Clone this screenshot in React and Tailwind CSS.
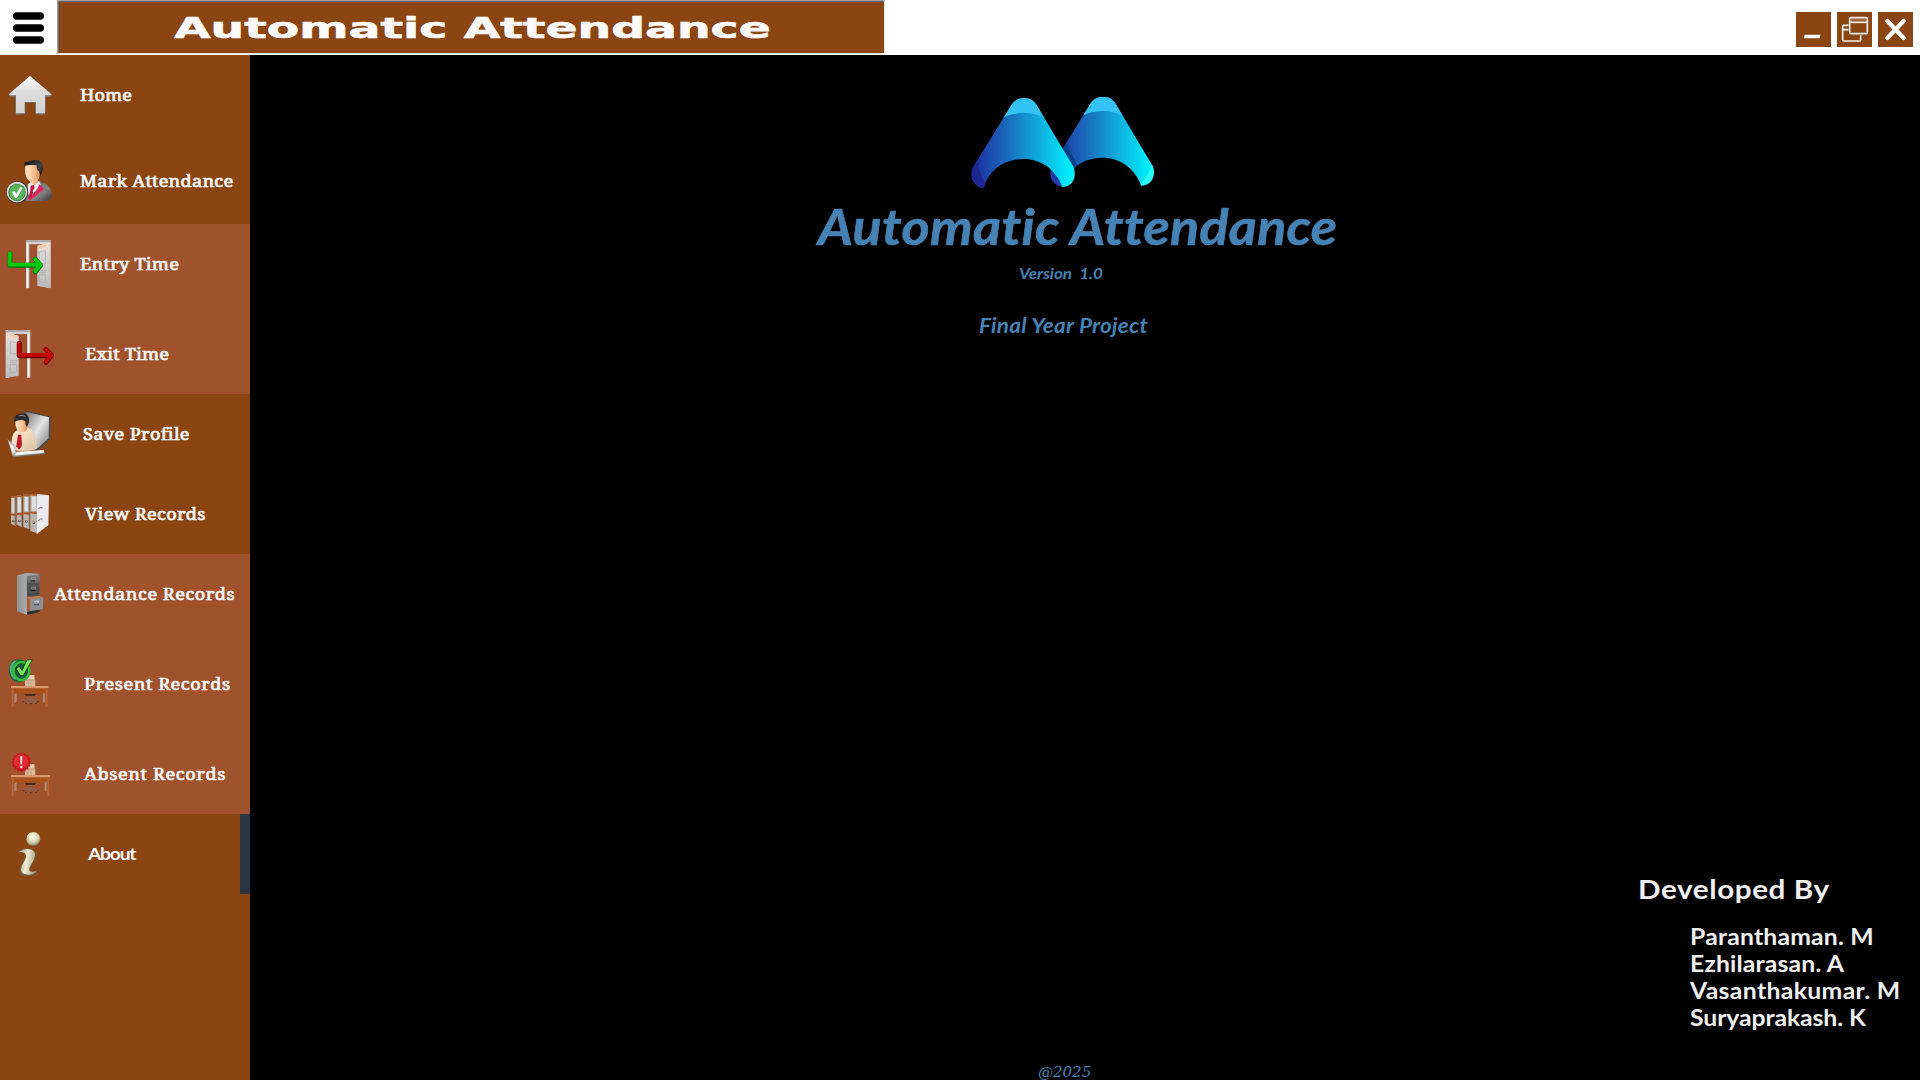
import React, { useLayoutEffect, useRef, useState } from "react";

// Text whose letters are spread evenly over the given width.
// With `wide`, the glyphs themselves are also stretched by a tenth.
function Spread({ text, width, wide = false, className = "" }) {
  const ref = useRef(null);
  const [spacing, setSpacing] = useState(0);
  useLayoutEffect(() => {
    const target = wide ? width / 1.1 : width;
    setSpacing((target - ref.current.offsetWidth) / (text.length - 1));
  }, []);
  return (
    <span
      ref={ref}
      className={"inline-block whitespace-pre leading-none " + (wide ? "origin-left scale-x-110 " : "") + className}
      style={{ letterSpacing: spacing + "px" }}
    >
      {text}
    </span>
  );
}

function Icon({ top, children }) {
  return (
    <svg className="h-20 w-[60px] shrink-0" viewBox={`0 ${top} 180 240`}>
      {children}
    </svg>
  );
}

const HomeIcon = () => (
  <Icon top={165}>
    <defs>
      <linearGradient id="hm" x1="0" y1="0" x2="0" y2="1">
        <stop offset="0" stopColor="#fff" />
        <stop offset=".4" stopColor="#dedede" />
        <stop offset="1" stopColor="#d2d2d2" />
      </linearGradient>
    </defs>
    <path d="M90 227 L156 283 Q157 291 149 290 L138 290 L137 341 Q136 344 132 344 L105 343 L105 309 L76 309 L76 343 L48 344 Q45 343 45 340 L45 290 L32 290 Q24 289 26 282 Z" fill="#73706c" />
    <path d="M90 228 L154 283 Q154 286 149 286 L135 286 L135 340 L108 340 L108 306 L74 306 L74 340 L48 340 L48 286 L31 286 Q27 285 28 281 Z" fill="url(#hm)" />
  </Icon>
);

const MarkIcon = () => (
  <Icon top={423}>
    <defs>
      <linearGradient id="face" x1="0" y1="0" x2="1" y2="0">
        <stop offset="0" stopColor="#fbe0c8" />
        <stop offset=".45" stopColor="#ffc9a0" />
        <stop offset="1" stopColor="#e08a55" />
      </linearGradient>
      <linearGradient id="hair" x1="0" y1="0" x2="1" y2="1">
        <stop offset="0" stopColor="#111" />
        <stop offset=".6" stopColor="#444" />
        <stop offset="1" stopColor="#111" />
      </linearGradient>
      <linearGradient id="suit" x1="0" y1="0" x2="1" y2="1">
        <stop offset="0" stopColor="#5a5a5a" />
        <stop offset=".6" stopColor="#858585" />
        <stop offset="1" stopColor="#333" />
      </linearGradient>
    </defs>
    <path d="M72 600 Q72 566 88 550 L119 543 Q156 556 156 588 Q154 604 122 604 L84 603 Z" fill="url(#suit)" />
    <path d="M84 553 L97 542 L118 544 L122 554 L100 580 L82 585 Z" fill="#f4f1f2" />
    <path d="M118 552 L132 568 L90 601 L83 598 L110 572 Z" fill="#e8235d" />
    <path d="M92 557 L102 555 L104 564 L99 570 L96 592 L86 594 L91 570 Z" fill="#c3123d" />
    <path d="M76 497 Q84 488 118 495 Q125 512 120 523 L113 547 Q108 558 99 554 L83 538 Q73 526 76 497 Z" fill="url(#face)" />
    <path d="M73 497 Q70 484 84 485 Q110 474 125 487 Q133 500 127 515 L121 529 L117 514 Q109 511 110 496 Q92 493 73 497 Z" fill="url(#hair)" />
    <circle cx="52" cy="577" r="33" fill="#343434" />
    <circle cx="51" cy="576" r="31" fill="#d9d9d9" />
    <circle cx="51" cy="577" r="26" fill="#2f6f36" />
    <circle cx="51" cy="577" r="24" fill="#58b45b" />
    <path d="M36 576 L44 573 L49 583 L61 561 L68 563 L51 594 L45 594 Z" fill="#fff" />
  </Icon>
);

const doorPaint = (id) => (
  <defs>
    <linearGradient id={id} x1="0" y1="0" x2="0" y2="1">
      <stop offset="0" stopColor="#f3dfd2" />
      <stop offset=".25" stopColor="#d7d5d3" />
      <stop offset="1" stopColor="#bcbcbc" />
    </linearGradient>
  </defs>
);

const EntryIcon = () => (
  <Icon top={12}>
    {doorPaint("dr1")}
    <path d="M78 61 H152 V204 H140 V73 H88 V205 H78 Z" fill="#d0d0d0" />
    <path d="M78 61 H152 V66 H78 Z" fill="#aaa" />
    <path d="M80 70 H84 V204 H80 Z" fill="#f0f0f0" />
    <path d="M112 77 L142 69 H151 V205 L112 198 Z" fill="url(#dr1)" />
    <path d="M118 75 L139 71 L139 80 L113 87 Z" fill="#f8c9a4" />
    <path d="M118 95 L136 92 V132 H118 Z M118 152 H136 V158 H118 Z M118 164 H136 V188 L118 186 Z" fill="none" stroke="#aaa" strokeWidth="2" />
    <path d="M30 101 V136 H116" fill="none" stroke="#007e08" strokeWidth="15" strokeLinecap="round" strokeLinejoin="round" />
    <path d="M106 118 L122 136 L106 155" fill="none" stroke="#007e08" strokeWidth="15" strokeLinecap="round" strokeLinejoin="round" />
    <path d="M29 101 V134 H116 M106 118 L121 135 L106 153" fill="none" stroke="#0bc70d" strokeWidth="11" strokeLinecap="round" strokeLinejoin="round" />
  </Icon>
);

const ExitIcon = () => (
  <Icon top={282}>
    {doorPaint("dr2")}
    <path d="M17 331 H91 V473 H81 V342 H27 V473 H17 Z" fill="#d0d0d0" />
    <path d="M17 331 H91 V336 H17 Z" fill="#aaa" />
    <path d="M84 340 H88 V472 H84 Z" fill="#f0f0f0" />
    <path d="M18 339 H28 L56 347 V467 L18 474 Z" fill="url(#dr2)" />
    <path d="M29 341 L52 347 L55 354 L31 349 Z" fill="#f8c9a4" />
    <path d="M31 365 L50 368 V401 H31 Z M31 421 H50 V427 H31 Z M31 433 H50 V456 L31 458 Z" fill="none" stroke="#aaa" strokeWidth="2" />
    <path d="M58 370 V407 H150 M138 388 L155 407 L138 427" fill="none" stroke="#740000" strokeWidth="15" strokeLinecap="round" strokeLinejoin="round" />
    <path d="M57 370 V405 H148 M138 388 L154 406 L138 425" fill="none" stroke="#c60404" strokeWidth="10" strokeLinecap="round" strokeLinejoin="round" />
  </Icon>
);

const SaveIcon = () => (
  <Icon top={-3}>
    <defs>
      <linearGradient id="scr" x1="0" y1="0" x2="1" y2="1">
        <stop offset="0" stopColor="#777" />
        <stop offset=".5" stopColor="#e6e6e6" />
        <stop offset="1" stopColor="#777" />
      </linearGradient>
      <linearGradient id="shirt" x1="0" y1="0" x2="1" y2="1">
        <stop offset="0" stopColor="#fff3df" />
        <stop offset="1" stopColor="#dcbf9b" />
      </linearGradient>
    </defs>
    <path d="M75 46 L153 65 L151 133 L113 168 L70 150 Z" fill="#4c4c4c" />
    <path d="M79 51 L147 67 L146 130 L114 159 L80 140 Z" fill="url(#scr)" />
    <path d="M35 165 Q31 120 48 107 L80 96 Q105 105 107 130 L112 160 Q100 170 60 168 Z" fill="url(#shirt)" />
    <path d="M48 72 Q60 62 84 78 Q86 96 78 108 Q66 118 54 108 Q42 92 48 72 Z" fill="url(#face)" />
    <path d="M43 80 Q40 62 55 58 Q76 48 86 66 Q90 82 80 96 Q75 87 76 79 Q64 70 43 80 Z" fill="#2c2c2c" />
    <path d="M54 64 Q66 54 79 66 Q67 62 54 64 Z" fill="#888" />
    <path d="M54 119 L64 119 L66 152 L57 164 L49 154 Z" fill="#bd1b2b" />
    <path d="M23 133 L43 150 L50 176 L38 184 Z" fill="#b5b5b5" />
    <path d="M26 140 L41 154 L46 172 L39 177 Z" fill="#eee" />
    <path d="M48 173 L134 166 V178 L38 187 Z" fill="#777" />
    <path d="M50 170 L132 165 V173 L42 182 Z" fill="#f0f0f0" />
  </Icon>
);

const binders = [
  [33, 303, 13, 82],
  [50, 301, 16, 87],
  [70, 299, 18, 96],
  [91, 297, 21, 110],
];

const ViewIcon = () => (
  <Icon top={237}>
    {binders.map(([x, y, w, h]) => (
      <g key={x}>
        <path d={`M${x} ${y} h${w} v${h + 8} l${-w} -7 Z`} fill="#b9b6b2" />
        <path d={`M${x} ${y} h${w} v5 h${-w} Z M${x} ${y + 53} h${w} v8 l${-w} -3 Z`} fill="#b8571f" />
        <path d={`M${x + 4} ${y + 7} h${w - 7} v43 h${7 - w} Z`} fill="#dcdcdc" />
        <path d={`M${x + w - 1} ${y} v${h + 7}`} stroke="#77706b" strokeWidth="2" />
        <circle cx={x + w / 2} cy={y + h - 7 - (h - 82) * 0.6} r="4" fill="#565656" />
        <circle cx={x + w / 2} cy={y + h - 8 - (h - 82) * 0.6} r="1.5" fill="#eee" />
      </g>
    ))}
    <path d="M112 297 L147 301 L145 391 L110 417 Z" fill="#e9e9ee" />
    <path d="M112 300 V416" stroke="#fff" strokeWidth="2" />
    <path d="M115 341 q7 -6 13 -3 M115 377 q7 -7 13 -5" fill="none" stroke="#777" strokeWidth="3" />
  </Icon>
);

const CabinetIcon = () => (
  <Icon top={12}>
    <defs>
      <linearGradient id="cab" x1="0" y1="0" x2="1" y2="0">
        <stop offset="0" stopColor="#8d9193" />
        <stop offset="1" stopColor="#a9adaf" />
      </linearGradient>
      <linearGradient id="cabf" x1="0" y1="0" x2="0" y2="1">
        <stop offset="0" stopColor="#8a8a8a" />
        <stop offset=".35" stopColor="#4d4d4d" />
        <stop offset="1" stopColor="#666" />
      </linearGradient>
    </defs>
    <path d="M51 77 L82 69 L82 195 L51 184 Z" fill="url(#cab)" />
    <path d="M51 77 L80 69 L119 72 L119 186 L82 195 L80 78 Z" fill="url(#cabf)" />
    <path d="M51 77 L80 69 L119 72 L82 79 Z" fill="#a3a7a8" />
    <path d="M83 102 H118 M83 133 L118 131" stroke="#333" strokeWidth="2" />
    <path d="M94 83 H107 V88 H94 Z M95 112 H107 V117 H95 Z" fill="none" stroke="#aaa" strokeWidth="1.5" />
    <path d="M93 93 h12 M94 122 h12" stroke="#1c1c1c" strokeWidth="3" />
    <path d="M81 142 L90 138 L92 180 L81 184 Z" fill="#b25a2c" />
    <path d="M81 142 L118 137 L130 143 L91 149 Z" fill="#c97647" />
    <path d="M90 147 L130 142 L129 177 L90 183 Z" fill="#8b8f91" />
    <path d="M103 152 h14 v5 h-14 Z" fill="#c7c7c7" />
    <path d="M102 164 h15" stroke="#444" strokeWidth="3" />
    <path d="M81 186 L119 180 V185 L82 195 Z" fill="#2d2d2d" />
  </Icon>
);

// Desk with a box and a chair; dy moves it within the icon.
const Desk = ({ dy, right }) => (
  <g transform={`translate(0 ${dy})`}>
    <path d="M75 393 L80 376 H103 V387 L106 390 V411 H75 Z" fill="#d8b995" />
    <path d="M80 376 H103 V387 H78 Z" fill="#e8cfae" />
    <path d="M78 390 H105 M84 391 v18 M93 391 v18" stroke="#a98765" strokeWidth="1.5" fill="none" />
    <path d={`M36 415 H${right - 3} V431 H36 Z`} fill="#a9501c" />
    <path d={`M33 408 H${right} V415 H33 Z`} fill="#d9976b" />
    <path d={`M35 416 H41 V470 H35 Z M${right - 8} 416 h6 V470 h-6 Z`} fill="#bb6430" />
    <path d={`M43 432 l7 -2 v26 l-7 3 Z M${right - 16} 430 h6 v28 l-6 -2 Z`} fill="#a98a78" />
    <path d="M73 432 H109 L104 438 H78 Z" fill="#4a2b22" />
    <path d="M92 438 V461 M70 453 L92 446 L114 453 M76 459 L92 448 L108 459" fill="none" stroke="#806a60" strokeWidth="2.5" />
    <path d="M68 455 h5 M111 455 h5 M75 460 h5 M105 460 h5 M90 461 h5" stroke="#473631" strokeWidth="3" />
  </g>
);

const PresentIcon = () => (
  <Icon top={282}>
    <Desk dy={0} right={145} />
    <path d="M40 332 Q58 325 76 333 L86 350 Q94 372 80 388 Q66 400 44 394 Q24 380 27 354 Q30 338 40 332 Z" fill="#13623d" />
    <path d="M29 352 Q34 332 52 331 Q36 345 37 362 Q38 380 52 392 Q28 386 29 352 Z" fill="#4cae83" />
    <ellipse cx="64" cy="363" rx="24" ry="27" fill="none" stroke="#39ba3b" strokeWidth="8" />
    <path d="M48 356 L57 350 L65 361 L82 331 L95 330 L68 377 L62 377 Z" fill="#0d451d" stroke="#0d451d" strokeWidth="4" />
    <path d="M50 356 L58 351 L66 364 L82 331 L95 330 L69 376 L62 376 Z" fill="#7be85c" />
  </Icon>
);

const burst = Array.from({ length: 32 }, (_, i) => {
  const r = i % 2 ? 25 : 30;
  const a = (i * Math.PI) / 16;
  return `${(64 + r * Math.cos(a)).toFixed(1)},${(637 + r * Math.sin(a)).toFixed(1)}`;
}).join(" ");

const AbsentIcon = () => (
  <Icon top={552}>
    <Desk dy={267} right={150} />
    <polygon points={burst} fill="#c8141f" />
    <circle cx="63" cy="635" r="22" fill="#e22a33" />
    <path d="M61 619 H67 L66 643 H62 Z" fill="#fff" />
    <circle cx="64" cy="651" r="3.5" fill="#fff" />
  </Icon>
);

const AboutIcon = () => (
  <Icon top={42}>
    <defs>
      <radialGradient id="ball" cx=".45" cy=".35" r=".65">
        <stop offset="0" stopColor="#fffbe6" />
        <stop offset=".6" stopColor="#ddd6b4" />
        <stop offset="1" stopColor="#7f7a62" />
      </radialGradient>
      <linearGradient id="stem" x1="0" y1="0" x2="1" y2=".2">
        <stop offset="0" stopColor="#a19b7e" />
        <stop offset=".5" stopColor="#f3edcf" />
        <stop offset="1" stopColor="#aca587" />
      </linearGradient>
    </defs>
    <circle cx="100" cy="117" r="21" fill="url(#ball)" />
    <path d="M54 156 Q70 142 91 146 Q108 150 108 166 Q106 182 96 194 Q88 206 91 213 Q98 218 113 210 Q109 226 86 228 Q62 228 59 211 Q60 197 70 183 Q78 170 73 162 Q66 156 55 160 Z" fill="#69644f" />
    <path d="M56 156 Q72 144 90 148 Q105 152 105 166 Q103 180 94 192 Q85 206 89 213 Q98 219 109 212 Q105 222 86 224 Q65 224 63 210 Q64 197 73 184 Q82 169 75 160 Q67 154 56 156 Z" fill="url(#stem)" />
  </Icon>
);

const serif = "font-['Noto_Serif','DejaVu_Serif_Condensed','DejaVu_Serif',serif] [font-stretch:condensed] text-[16.5px] font-normal [-webkit-text-stroke:0.7px_#f5f5f5]";

function Row({ icon, label, width, className = "", font = serif }) {
  return (
    <div className="flex h-20 items-center">
      {icon}
      <div className={"flex " + className}>
        <Spread wide text={label} width={width} className={font} />
      </div>
    </div>
  );
}

function Sidebar() {
  return (
    <nav className="flex w-[250px] shrink-0 flex-col bg-[#8b4513] text-[#f5f5f5]">
      <div className="flex h-[169px] flex-col gap-[6px]">
        <Row icon={<HomeIcon />} label="Home" width={52} className="ml-5" />
        <Row icon={<MarkIcon />} label="Mark Attendance" width={153} className="ml-5" />
      </div>
      <div className="flex h-[170px] flex-col gap-[10px] bg-[#a0522d]">
        <Row icon={<EntryIcon />} label="Entry Time" width={99} className="ml-5" />
        <Row icon={<ExitIcon />} label="Exit Time" width={84} className="ml-[25px]" />
      </div>
      <div className="flex flex-col">
        <Row icon={<SaveIcon />} label="Save Profile" width={106} className="ml-[23px]" />
        <Row icon={<ViewIcon />} label="View Records" width={120} className="ml-[25px]" />
      </div>
      <div className="flex h-[260px] flex-col gap-[10px] bg-[#a0522d]">
        <Row icon={<CabinetIcon />} label="Attendance Records" width={181} className="-ml-[6.5px]" />
        <Row icon={<PresentIcon />} label="Present Records" width={146} className="ml-6" />
        <Row icon={<AbsentIcon />} label="Absent Records" width={141} className="ml-[23.5px]" />
      </div>
      <div className="flex justify-between">
        <Row icon={<AboutIcon />} label="About" width={49} className="ml-[28px]" font="font-[Lato,sans-serif] text-[17.5px] font-bold" />
        <div className="w-[10px] bg-[#2c3442]" />
      </div>
    </nav>
  );
}

function Header() {
  return (
    <header className="flex h-[55px] shrink-0 bg-white">
      <div className="flex w-[57px] items-center justify-center">
        <svg className="h-[55px] w-[57px]" viewBox="0 0 57 55" stroke="#000" strokeWidth="7.4" strokeLinecap="round">
          <path d="M16.7 16h23.6M16.7 28h23.6M16.7 40h23.6" />
        </svg>
      </div>
      <div className="h-[54px] w-[828px] border-t border-l border-r border-b border-t-[#a0a0a0] border-r-[#e3e3e3] border-b-[#e3e3e3] border-l-[#a0a0a0]">
        <div className="flex h-full border-t border-l border-[#696969] bg-[#8b4513] pt-[12px] pl-[115px]">
          <span className="origin-top-left scale-x-[1.63] text-[29px] leading-none font-bold whitespace-nowrap text-[#fffafa] [-webkit-text-stroke:0.6px_#fffafa] [font-family:'DejaVu_Sans',sans-serif]">
            Automatic Attendance
          </span>
        </div>
      </div>
      <div className="mt-3 mr-[7px] ml-auto flex gap-[6px]">
        <svg className="size-[35px] bg-[#8b4513]" viewBox="0 0 105 105">
          <path d="M26 68 H73 L71 79 H24 Z" fill="#fff" />
        </svg>
        <svg className="size-[35px] bg-[#8b4513]" viewBox="0 0 105 105" fill="none" stroke="#f6efe9" strokeWidth="5">
          <path d="M34 40 H20 Q17 40 17 43 V83 Q17 87 21 87 H67 Q71 87 71 83 V70 M17 53 H34" />
          <rect x="38" y="17" width="53" height="48" rx="4" />
          <path d="M38 31 H91" />
          <path d="M40 24 H89" stroke="#b98a6b" strokeWidth="3" />
        </svg>
        <svg className="size-[35px] bg-[#8b4513]" viewBox="0 0 105 105" stroke="#fff" strokeWidth="13" strokeLinecap="round">
          <path d="M28 27 L77 78 M77 27 L28 78" />
        </svg>
      </div>
    </header>
  );
}

function Logo() {
  return (
    <svg className="mt-[25px] ml-[700px] h-[120px] w-[230px] shrink-0" viewBox="0 0 690 360">
      <defs>
        <linearGradient id="la" gradientUnits="userSpaceOnUse" x1="70" y1="0" x2="365" y2="0">
          <stop offset="0" stopColor="#1e2ea0" />
          <stop offset=".3" stopColor="#1b62b8" />
          <stop offset=".6" stopColor="#119fd4" />
          <stop offset="1" stopColor="#00f0fb" />
        </linearGradient>
        <path id="arch" d="M101 325 C72 321 56 292 69 262 L186 72 C203 48 242 48 258 72 L371 262 C382 292 366 321 337 321 C317 268 273 237 221 237 C163 237 116 270 101 325 Z" />
        <clipPath id="ca">
          <use href="#arch" />
        </clipPath>
      </defs>
      <g transform="translate(237 -4)">
        <g clipPath="url(#ca)">
          <rect x="50" y="40" width="340" height="300" fill="url(#la)" />
          <path d="M50 40 H400 V122 H300 Q221 72 140 122 H50 Z" fill="#35c2f4" />
          <path d="M370 255 Q360 290 334 315 V340 H400 V255 Z" fill="#2bfdf8" />
          <path d="M60 262 L110 190 L146 262 L100 330 H60 Z" fill="#05408f" />
          <path d="M50 275 Q90 275 101 325 V340 H50 Z" fill="#2038a8" />
        </g>
      </g>
      <g clipPath="url(#ca)">
        <rect x="50" y="40" width="340" height="300" fill="url(#la)" />
        <path d="M50 40 H400 V122 H300 Q221 75 140 122 H50 Z" fill="#35c2f4" />
        <path d="M83 235 Q84 280 108 312 L101 340 H50 V235 Z" fill="#1e2790" />
      </g>
    </svg>
  );
}

const developers = [
  ["Paranthaman. M", 184],
  ["Ezhilarasan. A", 154],
  ["Vasanthakumar. M", 210],
  ["Suryaprakash. K", 176],
];

export default function App() {
  return (
    <div className="flex h-[1080px] w-[1920px] flex-col overflow-hidden bg-black">
      <Header />
      <div className="flex min-h-0 flex-1">
        <Sidebar />
        <main className="flex flex-1 flex-col font-[Lato,sans-serif] font-bold text-[#4682b4]">
          <Logo />
          <div className="mt-[2px] ml-[568px] flex h-[50px] italic">
            <Spread wide text="Automatic Attendance" width={515} className="text-[49px] [-webkit-text-stroke:0.6px_#4682b4]" />
          </div>
          <div className="mt-[14px] ml-[769px] flex h-4 italic">
            <Spread wide text="Version  1.0" width={84} className="text-[15.5px]" />
          </div>
          <div className="mt-[33px] ml-[729px] flex h-[21px] italic">
            <Spread wide text="Final Year Project" width={169} className="text-[20.5px]" />
          </div>
          <section className="mt-auto mr-[20px] w-[262px] self-end text-[#f0f0f0]">
            <div className="flex h-[51px]">
              <Spread wide text="Developed By" width={191} className="text-[27px]" />
            </div>
            <ul className="ml-[52px]">
              {developers.map(([name, width]) => (
                <li key={name} className="flex h-[27px]">
                  <Spread wide text={name} width={width} className="text-[22.5px]" />
                </li>
              ))}
            </ul>
          </section>
          <footer className="mt-[31px] ml-[788px] flex h-[15px] font-normal italic">
            <Spread text="@2025" width={53} className="font-['DejaVu_Serif',serif] text-[15px]" />
          </footer>
        </main>
      </div>
    </div>
  );
}
